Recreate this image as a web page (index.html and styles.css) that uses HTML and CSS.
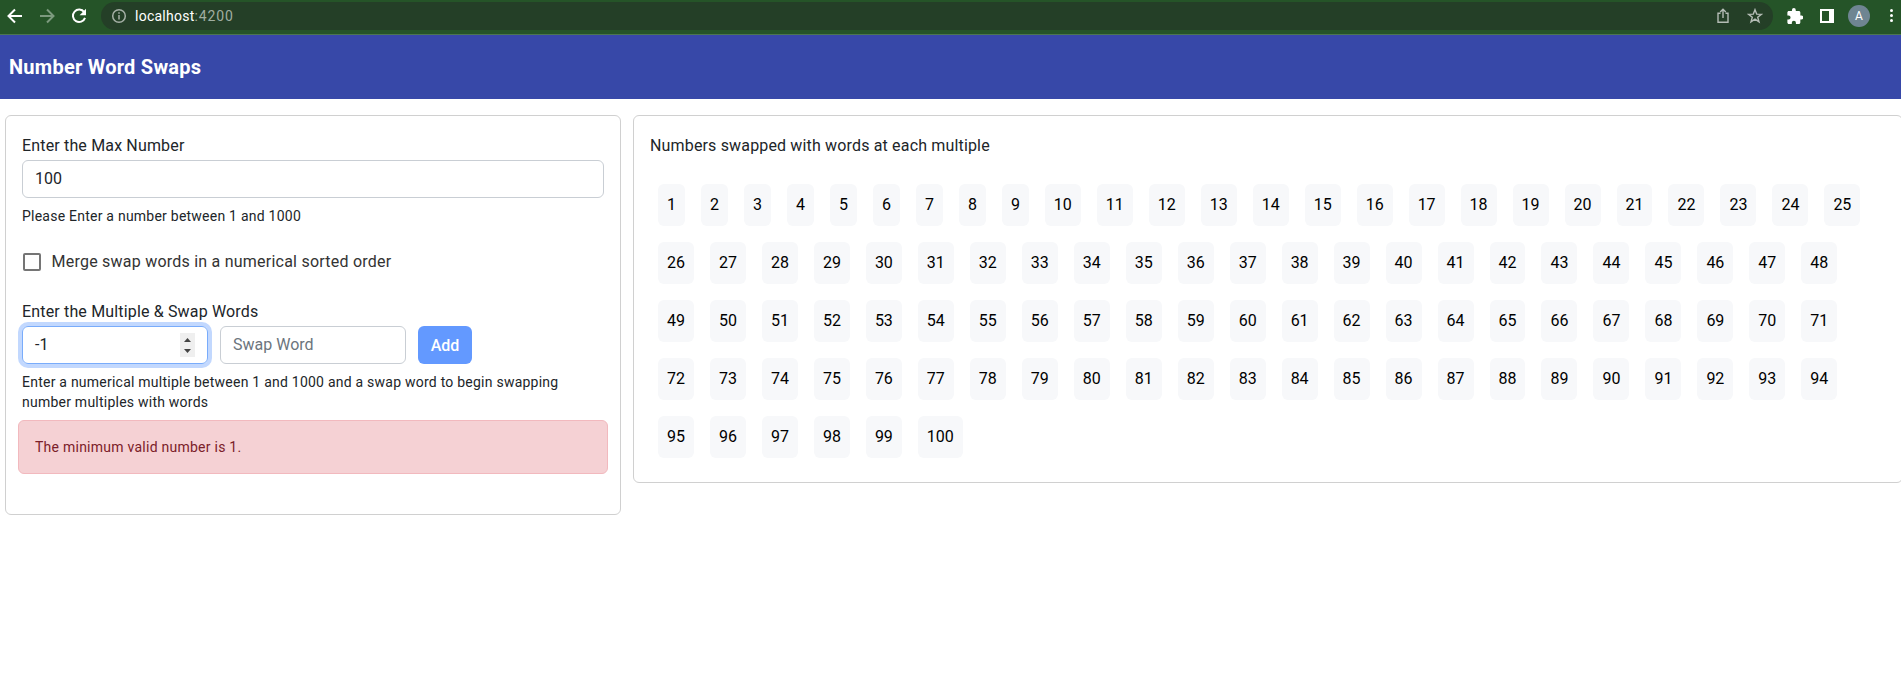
FILE: index.html
```html
<!DOCTYPE html>
<html lang="en">
<head>
<meta charset="utf-8">
<title>Number Word Swaps</title>
<link rel="stylesheet" href="styles.css">
</head>
<body>
<div class="browser">
  <svg class="nav" width="16" height="16" viewBox="0 0 16 16"><path d="M15 8H2M8 1.5L1.5 8 8 14.5"/></svg>
  <svg class="nav nav-off" width="16" height="16" viewBox="0 0 16 16"><path d="M1 8h13M8 1.5L14.5 8 8 14.5"/></svg>
  <svg class="nav" width="16" height="16" viewBox="0 0 16 16"><path d="M13.2 4.2A6.2 6.2 0 1 0 14 9.8"/><path class="solid" d="M15 .8v6.4H8.600z"/></svg>
  <div class="omnibox">
    <svg class="info" width="16" height="16" viewBox="0 0 16 16"><circle cx="8" cy="8" r="6.3"/><path d="M8 7v4.500M8 4.300v1.500"/></svg>
    <span class="url">localhost<span class="port">:4200</span></span>
    <svg class="share" width="16" height="16" viewBox="0 0 16 16"><path d="M5.500 5.200H3v9h10v-9h-2.500M8 10V1.500M5.200 4.100L8 1.300l2.800 2.800"/></svg>
    <svg class="share" width="16" height="16" viewBox="0 0 16 16"><path d="M8 1.700l1.700 4.400 4.700.2-3.700 3 1.300 4.500L8 11.200l-4 2.600 1.300-4.500-3.700-3 4.700-.2z"/></svg>
  </div>
  <svg class="puzzle" width="16" height="16" viewBox="1.500 1 21 21"><path d="M20.500 11H19V7c0-1.100-.9-2-2-2h-4V3.500a2.500 2.500 0 0 0-5 0V5H4c-1.100 0-2 .9-2 2v3.800h1.500a2.700 2.700 0 0 1 0 5.400H2V20c0 1.100.9 2 2 2h3.800v-1.500a2.700 2.700 0 0 1 5.400 0V22H17c1.100 0 2-.9 2-2v-4h1.500a2.500 2.500 0 0 0 0-5z"/></svg>
  <span class="side-panel"></span>
  <span class="avatar">A</span>
  <span class="dots"><i></i><i></i><i></i></span>
</div>
<header class="title-bar">Number Word Swaps</header>
<main class="columns">
  <section class="card form-card">
    <label class="label">Enter the Max Number</label>
    <div class="field">100</div>
    <p class="hint">Please Enter a number between 1 and 1000</p>
    <div class="check"><span class="box"></span><span>Merge swap words in a numerical sorted order</span></div>
    <label class="label label-swap">Enter the Multiple &amp; Swap Words</label>
    <div class="swap-row">
      <div class="field focused"><span>-1</span>
        <svg class="spinner" width="15" height="24" viewBox="0 0 15 24"><path d="M4 9l3.500-4L11 9zM4 16h7l-3.500 4z"/></svg>
      </div>
      <div class="field placeholder">Swap Word</div>
      <button class="add">Add</button>
    </div>
    <p class="hint">Enter a numerical multiple between 1 and 1000 and a swap word to begin swapping number multiples with words</p>
    <div class="alert">The minimum valid number is 1.</div>
  </section>
  <section class="card result-card">
    <div class="label">Numbers swapped with words at each multiple</div>
    <div class="chips" id="chips"></div>
  </section>
</main>
<script src="numbers.js"></script>
</body>
</html>
```
FILE: styles.css
```css
* { box-sizing: border-box; }
body {
  margin: 0;
  height: 680px;
  overflow: hidden;
  background: #fff;
  color: #212529;
  font: 16px/24px Roboto, sans-serif;
}
.browser {
  display: flex;
  align-items: center;
  height: 35px;
  padding: 0 5px 3px 7px;
  background: #255428;
  border-bottom: 1px solid #4c7650;
}
.nav { fill: none; stroke: #fff; stroke-width: 2; margin-right: 16px; flex: none; }
.nav-off { stroke: #7c9a7e; }
.nav .solid { fill: #fff; stroke: none; }
.omnibox {
  display: flex;
  align-items: center;
  flex: none;
  width: 1672px;
  height: 28px;
  margin-left: -2px;
  padding: 0 10px;
  border-radius: 14px;
  background: #243f27;
}
.info { fill: none; stroke: #a5b0a6; stroke-width: 1.5; }
.url { flex: 1; margin-left: 8px; color: #fff; font-size: 14px; letter-spacing: .25px; }
.port { color: #a0aea1; letter-spacing: .85px; }
.share { fill: none; stroke: #b4bcb5; stroke-width: 1.4; margin-left: 16px; }
.puzzle { fill: #fff; margin-left: 14px; }
.side-panel { width: 14px; height: 14px; margin-left: 17px; border: 2px solid #fff; border-right-width: 5px; }
.avatar {
  width: 22px;
  height: 22px;
  margin-left: 14px;
  border-radius: 50%;
  background: #6f8592;
  color: #fff;
  font-size: 12px;
  line-height: 23px;
  text-align: center;
}
.dots { display: grid; gap: 2px; margin-left: 20px; }
.dots i { width: 3px; height: 3px; border-radius: 50%; background: #fff; }
.title-bar {
  height: 64px;
  padding-left: 9px;
  background: #3748a8;
  color: #fff;
  font-size: 20px;
  font-weight: 700;
  line-height: 64px;
  letter-spacing: .25px;
}
.columns { display: flex; align-items: flex-start; gap: 12px; padding: 16px 0 0 5px; }
.card { flex: none; padding: 17px 16px; border: 1px solid #d0d0d0; border-radius: 6px; }
.form-card { width: 616px; height: 400px; }
.result-card { width: 1270px; height: 368px; }
.label { display: block; height: 27px; padding-top: 1px; letter-spacing: .16px; }
.label-swap { height: 26px; padding-top: 0; }
.field {
  height: 38px;
  padding: 6px 12px;
  border: 1px solid #c9ced4;
  border-radius: 6px;
}
.hint { margin: 8px 0 0; font-size: 14px; line-height: 20px; letter-spacing: .235px; }
.check {
  display: flex;
  align-items: center;
  height: 24px;
  margin: 24px 0 26px;
  padding-left: 1px;
  gap: 10.5px;
  letter-spacing: .23px;
  color: #333;
}
.box { width: 18px; height: 18px; border: 2px solid #757575; border-radius: 2px; }
.swap-row { display: flex; gap: 12px; }
.swap-row .field { width: 186px; }
.focused {
  display: flex;
  justify-content: space-between;
  border-color: #79acfb;
  box-shadow: 0 0 0 4px #c2d8fe;
}
.spinner { background: #efefef; fill: #444; }
.placeholder { color: #6c757d; }
.add {
  width: 54px;
  height: 38px;
  padding: 0;
  border: 0;
  border-radius: 6px;
  background: #6399ff;
  color: #fff;
  font: 500 16px Roboto, sans-serif;
}
.alert {
  height: 54px;
  margin: 8px -4px 0;
  padding: 16px;
  border: 1px solid #f2b9be;
  border-radius: 6px;
  background: #f5d1d4;
  color: #7b2029;
  font-size: 14px;
  line-height: 20px;
  letter-spacing: .25px;
}
.chips { display: flex; flex-wrap: wrap; margin-top: 16px; }
.chip {
  height: 42px;
  margin: 8px;
  padding: 9px;
  border-radius: 6px;
  background: #f7f8fa;
  color: #000;
  letter-spacing: -.01px;
}
```
FILE: numbers.js
```
const chips = document.getElementById('chips');
for (let n = 1; n <= 100; n++) {
  const chip = document.createElement('span');
  chip.className = 'chip';
  chip.textContent = n;
  chips.appendChild(chip);
}
```
